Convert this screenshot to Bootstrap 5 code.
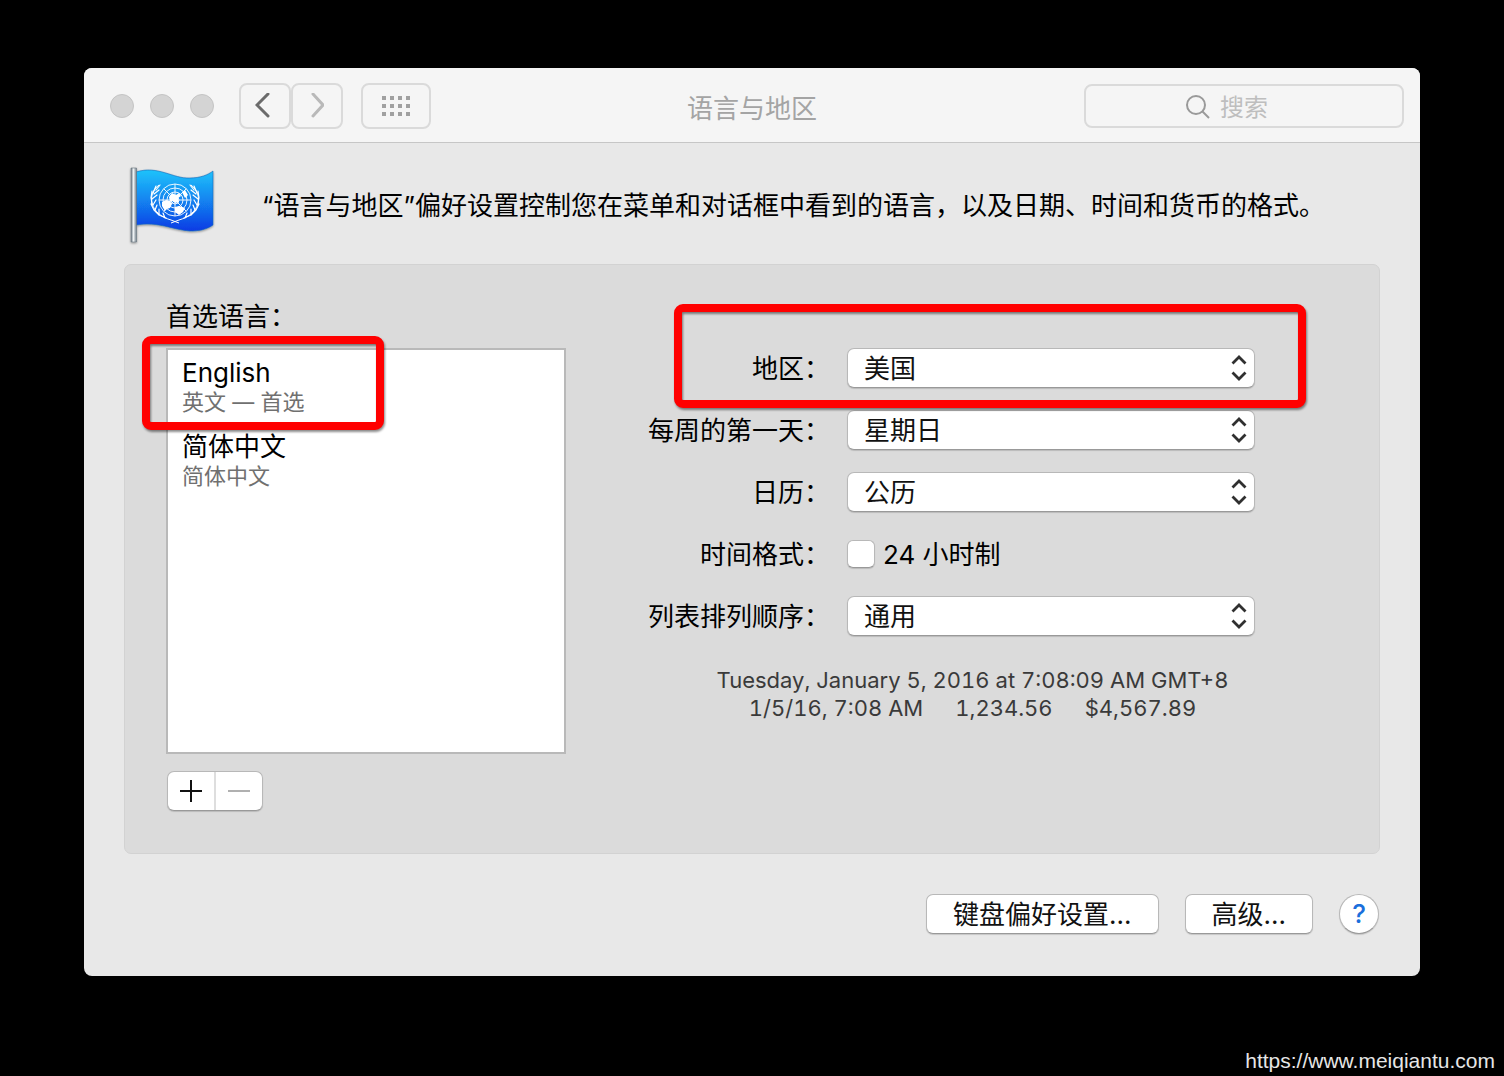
<!DOCTYPE html>
<html lang="zh-CN">
<head>
<meta charset="utf-8">
<meta name="viewport" content="width=device-width, initial-scale=1">
<title>语言与地区</title>
<link rel="stylesheet" href="https://cdn.jsdelivr.net/npm/bootstrap@5.3.0/dist/css/bootstrap.min.css">
<style>
  body { background: #000; color: #000; font-family: Inter, "Noto Sans CJK SC", sans-serif; font-size: 26px; font-weight: 400; line-height: 34px; }
  .prefs-window { margin: 68px 84px 0; background: #e8e8e8; border-radius: 8px; overflow: hidden; }
  .titlebar { display: grid; grid-template-columns: 1fr auto 1fr; align-items: center; height: 75px; padding: 2px 16px 0; background: #f5f5f5; border-bottom: 1px solid #c6c6c6; }
  .titlebar h1 { font-size: 26px; line-height: 34px; color: #a4a4a4; font-weight: 400; padding-top: 5px; }
  .lights { gap: 16px; margin-left: 10px; margin-right: 25px; }
  .light { width: 24px; height: 24px; border-radius: 50%; background: #d4d4d4; border: 1px solid #c4c4c4; padding: 0; }
  .tool-btn { height: 46px; width: 52px; padding: 0; border: 2px solid #dadada; border-radius: 8px; background: #f5f5f5; display: flex; align-items: center; justify-content: center; }
  .tool-wide { width: 70px; margin-left: 18px; }
  .search-box { width: 320px; height: 44px; border: 2px solid #dadada; border-radius: 8px; padding-left: 99px; gap: 9px; }
  .search-box input { border: 0; background: transparent; padding: 4px 0 0; font-size: 24px; line-height: 34px; color: #555; }
  .search-box input::placeholder { color: #bebebe; opacity: 1; }
  .intro { height: 121px; padding: 4px 44px 0; gap: 44px; }
  .panel { margin: 0 40px; padding: 35px 0 42px 41px; background: #dbdbdb; border: 1px solid #d2d2d2; border-radius: 7px; }
  .lang-side { flex: 0 0 400px; }
  .lang-box { height: 406px; margin: 14px 0 17px; background: #fff; border: 2px solid #b9b9b9; }
  .lang-box li { padding: 8px 14px; line-height: 30px; }
  .lang-box .sub { font-size: 22px; line-height: 28px; color: #707070; }
  .callout { position: absolute; z-index: 2; border: 8px solid #f00; border-radius: 9px; filter: drop-shadow(1px 2px 1px rgba(0,0,0,.45)); pointer-events: none; }
  .callout-lang { top: -14px; left: -26px; width: 242px; height: 94px; }
  .callout-region { top: -44px; bottom: -20px; left: 26px; right: -51px; }
  .mac { background-color: #fff; border: 1px solid #b8b8b8; border-bottom-color: #999; border-radius: 7px; box-shadow: 0 1px 1px rgba(0,0,0,.15); color: #111; height: 40px; padding: 0; font-size: 26px; line-height: 34px; }
  .pm { width: 96px; margin-left: 1px; overflow: hidden; }
  .pm button { border: 0; background: transparent; padding: 0; display: flex; align-items: center; justify-content: center; }
  .pm button + button { border-left: 2px solid #dedede; }
  .settings { padding: 48px 124px 0 82px; gap: 22px; }
  .setting { display: grid; grid-template-columns: 182px 1fr; column-gap: 17px; align-items: center; height: 40px; position: relative; }
  .setting label, .setting > .caption-text { padding-top: 2px; white-space: nowrap; }
  .setting > label, .setting > .caption-text { text-align: right; }
  .form-select.mac { padding: 2px 40px 0 16px; background-image: url("data:image/svg+xml,%3csvg xmlns='http://www.w3.org/2000/svg' viewBox='0 0 16 26'%3e%3cpath d='M1.5 8.5 8 2l6.500 6.500M1.500 17.500 8 24l6.500-6.500' fill='none' stroke='%23303030' stroke-width='2.800'/%3e%3c/svg%3e"); background-size: 16px 26px; background-position: right 7px center; }
  .form-check-input.mac { width: 28px; height: 28px; margin: 0; border-radius: 6px; }
  .sample { margin-top: 30px; font-size: 22px; line-height: 28px; color: #3a3a3a; text-align: center; font-variant-numeric: tabular-nums; }
  .actions { padding: 40px 41px 42px; gap: 26px; }
  .push { padding: 2px 26px 0; }
  .help { width: 40px; border-radius: 50%; color: #1a6fdc; font-weight: 500; }
  .source { padding-right: 9px; font-family: "Liberation Sans", sans-serif; font-size: 21px; line-height: 30px; color: #e6e6e6; }
</style>
<script src="https://cdn.jsdelivr.net/npm/bootstrap@5.3.0/dist/js/bootstrap.bundle.min.js"></script>
</head>
<body class="d-flex flex-column min-vh-100">
<main class="prefs-window">
  <header class="titlebar">
    <div class="d-flex align-items-center">
      <div class="lights d-flex">
        <button class="light" type="button" aria-label="关闭"></button>
        <button class="light" type="button" aria-label="最小化"></button>
        <button class="light" type="button" aria-label="缩放"></button>
      </div>
      <button class="tool-btn" type="button" aria-label="后退"><svg width="20" height="26" viewBox="0 0 20 26" fill="none" stroke="#6b6b6b" stroke-width="3" stroke-linecap="round"><path d="M13 1 2 12l11 11"/></svg></button>
      <button class="tool-btn" type="button" aria-label="前进"><svg width="14" height="26" viewBox="0 0 14 26" fill="none" stroke="#b9b9b9" stroke-width="3" stroke-linecap="round"><path d="m3 1 10 11L3 23"/></svg></button>
      <button class="tool-btn tool-wide" type="button" aria-label="全部显示"><svg width="28" height="20" viewBox="0 0 28 20" fill="#a0a0a0"><path d="M0 0h4v4H0zM8 0h4v4H8zM16 0h4v4h-4zM24 0h4v4h-4zM0 8h4v4H0zM8 8h4v4H8zM16 8h4v4h-4zM24 8h4v4h-4zM0 16h4v4H0zM8 16h4v4H8zM16 16h4v4h-4zM24 16h4v4h-4z"/></svg></button>
    </div>
    <h1 class="m-0">语言与地区</h1>
    <div class="search-box d-flex align-items-center ms-auto">
      <svg class="flex-shrink-0" width="26" height="26" viewBox="0 0 26 26" fill="none" stroke="#9a9a9a" stroke-width="2"><circle cx="11" cy="12" r="9"/><path d="m17.500 18.500 6.500 6.500"/></svg>
      <input class="form-control shadow-none" type="search" placeholder="搜索" aria-label="搜索">
    </div>
  </header>

  <section class="intro d-flex align-items-center">
    <svg class="flex-shrink-0" width="90" height="84" viewBox="0 0 90 84" aria-hidden="true">
      <defs>
        <linearGradient id="sky" x1="0" y1="0" x2="0" y2="1"><stop offset="0" stop-color="#1fc3fb"/><stop offset=".5" stop-color="#1283f0"/><stop offset="1" stop-color="#0f3be4"/></linearGradient>
        <linearGradient id="pole"><stop offset="0" stop-color="#68757f"/><stop offset=".45" stop-color="#eef2f4"/><stop offset="1" stop-color="#74808a"/></linearGradient>
        <filter id="soft" x="-10%" y="-10%" width="120%" height="125%"><feDropShadow dx="0" dy="1" stdDeviation="1" flood-opacity=".4"/></filter>
      </defs>
      <g filter="url(#soft)">
        <path d="M8 8C30 1 45 15 62 14c10 0 18-3 23-7v54c-7 5-15 6-23 6C45 66 30 57 8 61z" fill="url(#sky)" stroke="#1668b8" stroke-width=".6"/>
        <path d="M3 4h5.500v74H3z" fill="url(#pole)" stroke="#6a7680" stroke-width=".6"/>
      </g>
      <g fill="none" stroke="#fff" stroke-width=".9">
        <circle cx="47" cy="36" r="16"/><circle cx="47" cy="36" r="12"/><circle cx="47" cy="36" r="8"/><circle cx="47" cy="36" r="4"/>
        <path d="M47 20v32M31 36h32M35.700 24.700l22.600 22.600M58.300 24.700 35.700 47.300"/>
      </g>
      <path fill="#fff" d="M34 38l4-2 4 1 2 3-2 4-3 1-2 2-3-5zM41 33l3-4 4 2 3-2 2 3-3 2 1 4-4 1-2-2-3 1zM47 43l4-1 6 2-2 4-4 3-4-3zM54 28l3-2 3 5-3 3z"/>
      <path d="M31 21C18 31 22 50 43 56l8 3M63 21c13 10 9 29-12 35l-8 3" fill="none" stroke="#fff" stroke-width="1"/>
      <path d="M32 21l-4 5M28 22l-3 7M31 26l-5 4M24 27l-1 7M29 31l-5 4M23 33l1 7M28 36l-3 5M23 40l3 6M29 41l-2 5M26 46l5 5M31 45l0 6M31 51l7 3M35 49l2 5M62 21l4 5M66 22l3 7M63 26l5 4M70 27l1 7M65 31l5 4M71 33l-1 7M66 36l3 5M71 40l-3 6M65 41l2 5M68 46l-5 5M63 45l0 6M63 51l-7 3M59 49l-2 5" stroke="#fff" stroke-width="1.200" stroke-linecap="round"/>
    </svg>
    <p class="m-0">“语言与地区”偏好设置控制您在菜单和对话框中看到的语言，以及日期、时间和货币的格式。</p>
  </section>

  <section class="panel d-flex">
    <div class="lang-side">
      <div id="lang-title">首选语言：</div>
      <div class="lang-box position-relative">
        <ul class="list-unstyled m-0" aria-labelledby="lang-title">
          <li><div>English</div><div class="sub">英文 — 首选</div></li>
          <li><div>简体中文</div><div class="sub">简体中文</div></li>
        </ul>
        <div class="callout callout-lang"></div>
      </div>
      <div class="pm mac d-flex">
        <button class="flex-fill" type="button" aria-label="添加"><svg width="22" height="22" viewBox="0 0 22 22" stroke="#111" stroke-width="2"><path d="M0 11h22M11 0v22"/></svg></button>
        <button class="flex-fill" type="button" aria-label="移除" disabled><svg width="22" height="22" viewBox="0 0 22 22" stroke="#b0b0b0" stroke-width="2"><path d="M0 11h22"/></svg></button>
      </div>
    </div>
    <div class="flex-fill">
      <form class="settings d-flex flex-column">
        <div class="setting">
          <label for="region">地区：</label>
          <select class="form-select mac" id="region"><option>美国</option></select>
          <div class="callout callout-region"></div>
        </div>
        <div class="setting">
          <label for="firstday">每周的第一天：</label>
          <select class="form-select mac" id="firstday"><option>星期日</option></select>
        </div>
        <div class="setting">
          <label for="calendar">日历：</label>
          <select class="form-select mac" id="calendar"><option>公历</option></select>
        </div>
        <div class="setting">
          <span class="caption-text">时间格式：</span>
          <div class="d-flex align-items-center gap-2">
            <input class="form-check-input mac" type="checkbox" id="h24">
            <label for="h24">24 小时制</label>
          </div>
        </div>
        <div class="setting">
          <label for="order">列表排列顺序：</label>
          <select class="form-select mac" id="order"><option>通用</option></select>
        </div>
      </form>
      <div class="sample">
        <div>Tuesday, January 5, 2016 at 7:08:09 AM GMT+8</div>
        <div class="d-flex justify-content-center"><span>1/5/16, 7:08 AM</span><span class="mx-4 px-2">1,234.56</span><span>$4,567.89</span></div>
      </div>
    </div>
  </section>

  <footer class="actions d-flex justify-content-end">
    <button class="btn mac push" type="button">键盘偏好设置...</button>
    <button class="btn mac push" type="button">高级...</button>
    <button class="btn mac help" type="button" aria-label="帮助">?</button>
  </footer>
</main>
<div class="source mt-auto text-end">https://www.meiqiantu.com</div>
</body>
</html>
